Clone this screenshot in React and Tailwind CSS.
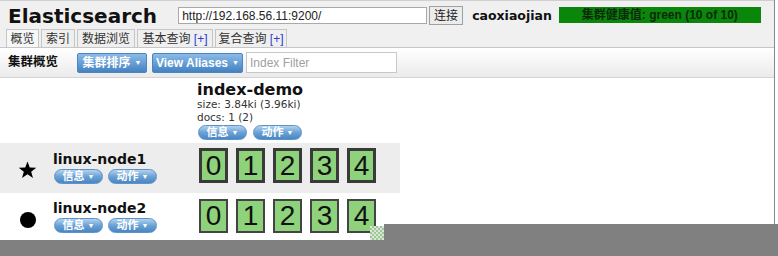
import React from "react";

const cjk = { fontFamily: '"Liberation Sans", "Noto Sans CJK SC", sans-serif' };
const dv = { fontFamily: '"DejaVu Sans", "Noto Sans CJK SC", sans-serif' };

function Pill({ label, className = "" }) {
  return (
    <div
      className={`flex h-[15px] w-[49px] items-center justify-center gap-[3px] rounded-full border border-[#5e93c8] bg-gradient-to-b from-[#b3d2ee] via-[#6aa2d6] to-[#4a86c2] text-[11px] font-bold leading-none text-white ${className}`}
      style={cjk}
    >
      <span>{label}</span>
      <span className="text-[7px]">▼</span>
    </div>
  );
}

function Shard({ n, primary }) {
  return (
    <div
      className={`flex w-[29px] items-center justify-center bg-[#8fd27c] text-[28px] leading-none text-[#111] ${
        primary ? "h-[35px] border-[3px] border-[#3a3a3a]" : "h-[34px] border-2 border-[#444]"
      }`}
      style={{ fontFamily: '"Liberation Sans", sans-serif' }}
    >
      {n}
    </div>
  );
}

function NodeRow({ name, primary, gray }) {
  return (
    <div className={`flex h-[50px] w-[400px] ${gray ? "bg-[#ededed]" : "bg-white"}`}>
      <div className="flex w-[53px] items-center justify-center pl-[2px] pt-[4px]">
        {primary ? (
          <svg width="19" height="18" viewBox="0 0 24 23">
            <path
              d="M12 0.5 L14.9 8.2 L23.2 8.5 L16.7 13.6 L19 21.6 L12 17 L5 21.6 L7.3 13.6 L0.8 8.5 L9.1 8.2 Z"
              fill="#000"
            />
          </svg>
        ) : (
          <div className="h-[16px] w-[16px] rounded-full bg-black" />
        )}
      </div>
      <div className={`flex w-[146px] flex-col ${primary ? "pt-[8px]" : "pt-[7px]"}`}>
        <div className="text-[14px] font-bold leading-[16px] text-[#111]" style={dv}>{name}</div>
        <div className="mt-[2px] flex gap-[5px] pl-[1px]">
          <Pill label="信息" />
          <Pill label="动作" />
        </div>
      </div>
      <div className={`flex gap-[8px] ${primary ? "pt-[5px]" : "pt-[6px]"}`}>
        {[0, 1, 2, 3, 4].map((n) => (
          <Shard key={n} n={n} primary={primary} />
        ))}
      </div>
    </div>
  );
}

function Tab({ children, w, active }) {
  return (
    <div
      className={`flex h-[18px] items-center justify-center border border-b-0 border-[#c6c6c6] text-[12px] leading-none text-[#333] ${
        active ? "bg-[#f7f7f7]" : "bg-[#efefef]"
      }`}
      style={{ width: w, ...cjk }}
    >
      {children}
    </div>
  );
}

export default function App() {
  return (
    <div className="relative h-[256px] w-[778px] overflow-hidden bg-white">
      <div className="w-[775px] border-r border-[#8a8a8a]">
        {/* header */}
        <div className="border-t border-[#cfcfcf] bg-[#f0f0f0] pt-[3px]">
          <div className="flex h-[24px] items-start pl-[8px]">
            <div className="text-[20px] font-bold leading-[24px] text-[#111]" style={dv}>
              Elasticsearch
            </div>
            <div
              className="ml-[21px] mt-[3px] flex h-[17px] w-[249px] items-center border border-[#a9a9a9] bg-white pl-[3px] text-[12px] leading-none text-[#222]"
              style={cjk}
            >
              http://192.168.56.11:9200/
            </div>
            <div
              className="ml-[2px] mt-[2px] flex h-[19px] w-[34px] items-center justify-center border border-[#a0a0a0] bg-[#ececec] text-[12px] leading-none text-[#222]"
              style={cjk}
            >
              连接
            </div>
            <div className="ml-[9px] text-[12.5px] font-bold leading-[24px] text-[#111]" style={dv}>
              caoxiaojian
            </div>
            <div
              className="ml-[7px] mt-[3px] flex h-[16px] w-[202px] items-center justify-center bg-[#0a860a] text-[12px] font-bold leading-none text-[#0c2a0c]"
              style={cjk}
            >
              集群健康值: green (10 of 10)
            </div>
          </div>
          <div className="mt-[1px] flex gap-[2px] border-b border-[#c6c6c6] pl-[6px]">
            <Tab w={33} active>概览</Tab>
            <Tab w={34}>索引</Tab>
            <Tab w={58}>数据浏览</Tab>
            <Tab w={76}>
              基本查询&nbsp;<span className="text-[#2a3fd1]">[+]</span>
            </Tab>
            <Tab w={72}>
              复合查询&nbsp;<span className="text-[#2a3fd1]">[+]</span>
            </Tab>
          </div>
        </div>

        {/* toolbar */}
        <div className="flex h-[30px] items-center border-b border-[#d4d4d4] bg-gradient-to-b from-[#ffffff] to-[#ebebeb] pl-[8px]">
          <div className="w-[49px] whitespace-nowrap text-[12.5px] font-bold leading-none text-[#111]" style={cjk}>
            集群概览
          </div>
          <div
            className="ml-[20px] flex h-[20px] w-[70px] items-center justify-center gap-[4px] rounded-[2px] border border-[#4d86bf] bg-gradient-to-b from-[#8bbbe8] to-[#4382c2] text-[12px] font-bold leading-none text-white"
            style={cjk}
          >
            <span>集群排序</span>
            <span className="text-[7px]">▼</span>
          </div>
          <div
            className="ml-[5px] flex h-[20px] w-[91px] items-center justify-center gap-[4px] rounded-[2px] border border-[#4d86bf] bg-gradient-to-b from-[#8bbbe8] to-[#4382c2] text-[12px] font-bold leading-none text-white"
            style={cjk}
          >
            <span>View Aliases</span>
            <span className="text-[7px]">▼</span>
          </div>
          <div
            className="ml-[3px] flex h-[21px] w-[151px] items-center border border-[#c8c8c8] bg-white pl-[3px] text-[12px] leading-none text-[#a0a0a0]"
            style={cjk}
          >
            Index Filter
          </div>
        </div>

        {/* index column */}
        <div className="flex pt-[3px]">
          <div className="w-[197px]" />
          <div className="flex flex-col">
            <div className="text-[16px] font-bold leading-[17px] text-[#111]" style={dv}>
              index-demo
            </div>
            <div className="text-[10.5px] leading-[13px] text-[#333]" style={dv}>
              size: 3.84ki (3.96ki)
            </div>
            <div className="text-[10.5px] leading-[13px] text-[#333]" style={dv}>
              docs: 1 (2)
            </div>
            <div className="mt-[1px] flex gap-[6px] pl-[1px]">
              <Pill label="信息" />
              <Pill label="动作" />
            </div>
          </div>
        </div>

        <div className="mt-[3px]">
          <NodeRow name="linux-node1" primary gray />
          <NodeRow name="linux-node2" />
        </div>
      </div>

      {/* overlaying grey window region */}
      <div className="absolute left-0 top-[240px] h-[16px] w-[778px] bg-[#808080]" />
      <div className="absolute left-[384px] top-[224px] h-[32px] w-[394px] bg-[#808080]" />
      <div
        className="absolute left-[370px] top-[226px] h-[14px] w-[14px]"
        style={{
          backgroundImage: "repeating-conic-gradient(#9fc79a 0% 25%, #d9e8d6 0% 50%)",
          backgroundSize: "4px 4px",
        }}
      />
    </div>
  );
}
